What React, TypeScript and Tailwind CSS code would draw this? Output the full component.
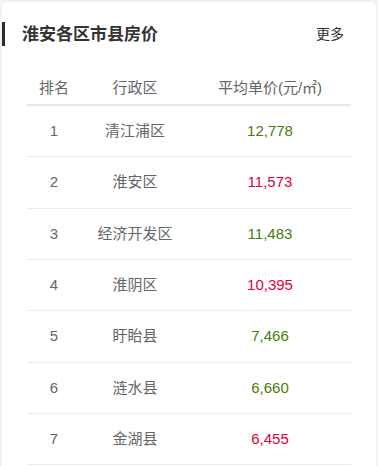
import React from "react";

const rows = [
  { rank: 1, name: "清江浦区", price: "12,778", up: true },
  { rank: 2, name: "淮安区", price: "11,573", up: false },
  { rank: 3, name: "经济开发区", price: "11,483", up: true },
  { rank: 4, name: "淮阴区", price: "10,395", up: false },
  { rank: 5, name: "盱眙县", price: "7,466", up: true },
  { rank: 6, name: "涟水县", price: "6,660", up: true },
  { rank: 7, name: "金湖县", price: "6,455", up: false },
];

export default function App() {
  return (
    <div
      className="w-[378px] h-[466px] overflow-hidden bg-[#f2f2f2] pt-[2px] pl-[2px] pr-[2px]"
      style={{ fontFamily: '"Liberation Sans", "Noto Sans CJK SC", sans-serif' }}
    >
      <div className="bg-white rounded-[5px] h-[480px] pt-[20px]">
        <div className="flex items-center h-[24px]">
          <div className="w-[3px] h-[24px] bg-[#2b2b2b]" />
          <div className="ml-[17px] text-[17px] font-bold text-[#333] leading-none">
            淮安各区市县房价
          </div>
          <div className="ml-auto mr-[32px] text-[14px] text-[#333] leading-none">更多</div>
        </div>
        <div className="mx-[25px] mt-[26px]">
          <div className="flex items-center h-[34px] border-b-2 border-[#e8e8e8] text-[15px] text-[#666]">
            <div className="w-[54px] text-center">排名</div>
            <div className="w-[108px] text-center">行政区</div>
            <div className="flex-1 text-center">平均单价(元/㎡)</div>
          </div>
          {rows.map((r) => (
            <div
              key={r.rank}
              className="flex items-center h-[51.33px] border-b border-[#ebebeb] text-[15px] text-[#666]"
            >
              <div className="w-[54px] text-center">{r.rank}</div>
              <div className="w-[108px] text-center">{r.name}</div>
              <div
                className={
                  "flex-1 text-center " + (r.up ? "text-[#4a7c0c]" : "text-[#e2003c]")
                }
              >
                {r.price}
              </div>
            </div>
          ))}
        </div>
      </div>
    </div>
  );
}
